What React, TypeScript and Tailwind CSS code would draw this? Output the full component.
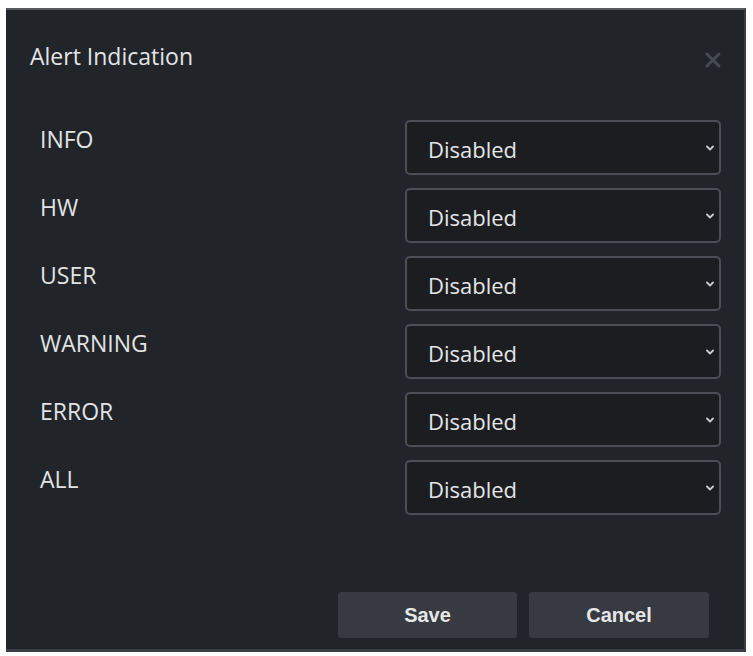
const levels = ['INFO', 'HW', 'USER', 'WARNING', 'ERROR', 'ALL'];

function Chevron() {
  return (
    <svg width="8" height="6" viewBox="0 0 8 6" className="text-[#c9cbce]">
      <path d="M1 1.5 L4 4.5 L7 1.5" fill="none" stroke="currentColor" strokeWidth="1.8" strokeLinecap="round" strokeLinejoin="round" />
    </svg>
  );
}

function SelectBox() {
  return (
    <div className="w-[316px] h-[55px] rounded-[5px] border-2 border-[#4b4f55] bg-[#1b1d21] flex items-center justify-between pl-[21px] pr-[5px]">
      <span className="text-[22px] leading-[28px] pt-[2px] text-[#e4e5e7]">Disabled</span>
      <Chevron />
    </div>
  );
}

export default function App() {
  return (
    <div className="w-[753px] h-[656px] bg-white pt-[8px] pl-[6px] font-['Open_Sans',sans-serif]">
      <div className="w-[740px] h-[644px] bg-[#212429] border-t-2 border-[#55585d] border-b-[3px] border-b-[#3a3d42] border-r-2 border-r-[#3a3d42] flex flex-col">
        {/* Header */}
        <div className="flex items-center justify-between pl-[24px] pr-[21px] pt-[32px]">
          <h1 className="text-[23px] leading-[28px] text-[#e3e4e6]">Alert Indication</h1>
          <svg width="20" height="20" viewBox="0 0 20 20" className="mt-[8px] text-[#464b52]">
            <path d="M4 4 L16 16 M16 4 L4 16" stroke="currentColor" strokeWidth="3" strokeLinecap="round" />
          </svg>
        </div>

        {/* Rows */}
        <div className="flex flex-col gap-[13px] mt-[50px] pl-[34px] pr-[23px]">
          {levels.map((level) => (
            <div key={level} className="flex items-start justify-between">
              <span className="text-[23px] leading-[28px] text-[#e2e3e5] pt-[5px]">{level}</span>
              <SelectBox />
            </div>
          ))}
        </div>

        {/* Footer */}
        <div className="flex justify-end gap-[12px] mt-auto mb-[11px] pr-[35px]">
          <button className="w-[179px] h-[46px] rounded-[3px] bg-[#373a40] text-[20px] font-bold text-[#e6e7e9] font-['Liberation_Sans',sans-serif]">
            Save
          </button>
          <button className="w-[180px] h-[46px] rounded-[3px] bg-[#373a40] text-[20px] font-bold text-[#e6e7e9] font-['Liberation_Sans',sans-serif]">
            Cancel
          </button>
        </div>
      </div>
    </div>
  );
}
